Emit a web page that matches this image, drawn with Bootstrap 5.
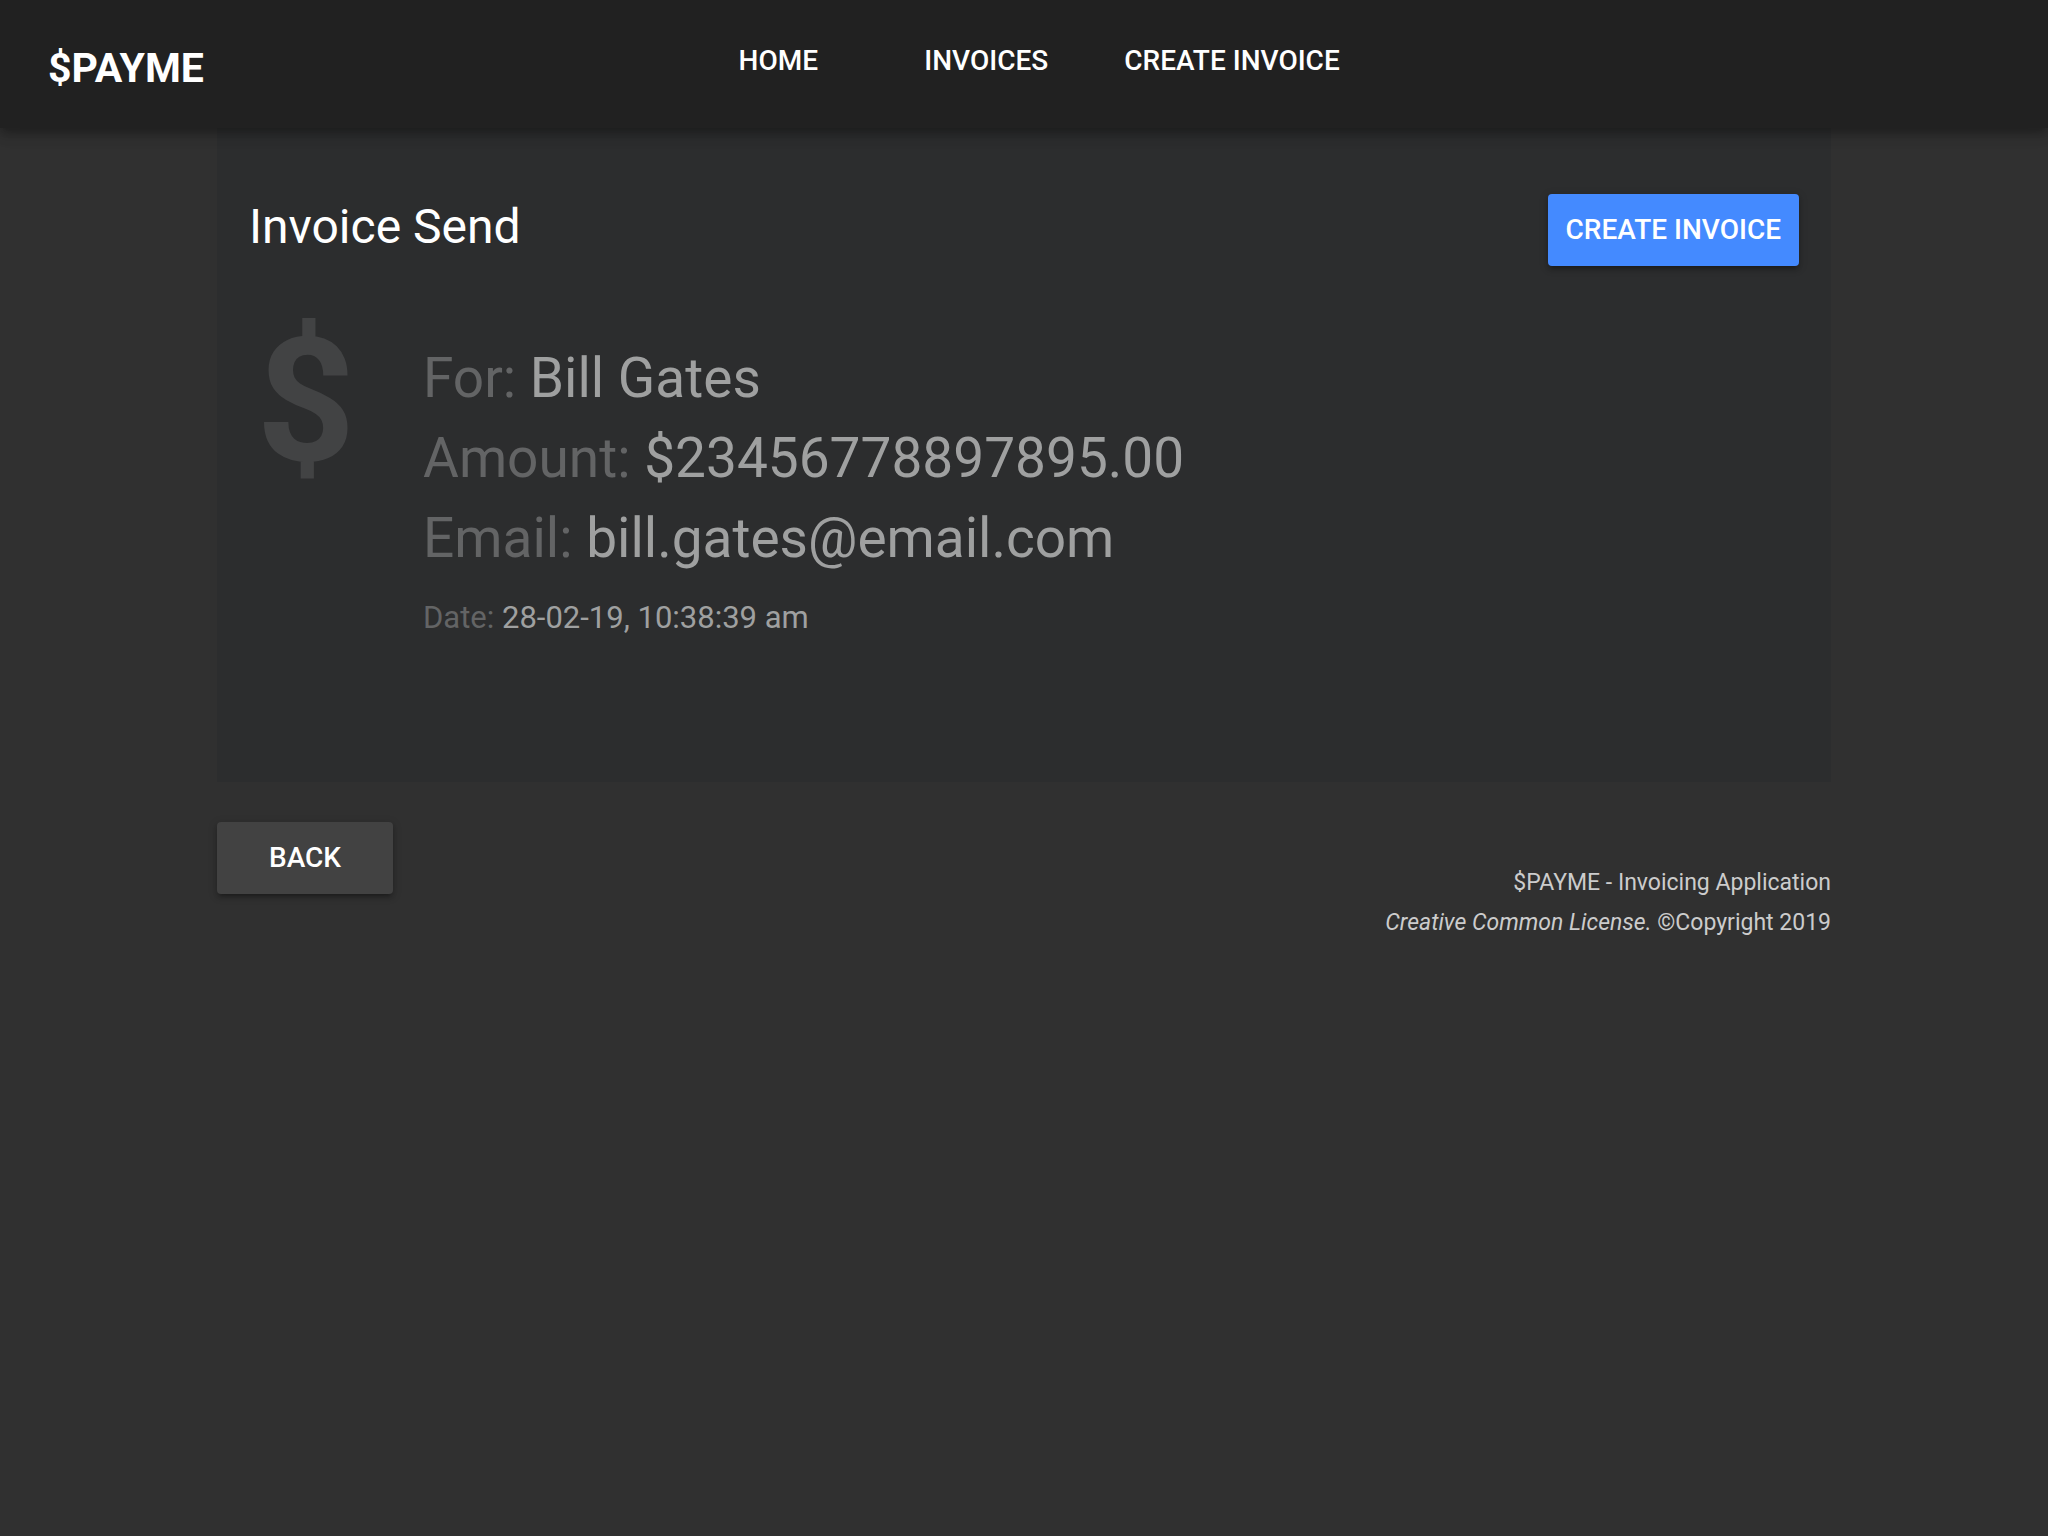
<!DOCTYPE html>
<html lang="en">
<head>
<meta charset="utf-8">
<meta name="viewport" content="width=device-width, initial-scale=1">
<title>$PAYME - Invoice Send</title>
<link href="https://cdn.jsdelivr.net/npm/bootstrap@5.3.0/dist/css/bootstrap.min.css" rel="stylesheet">
<style>
  body {
    background: #303030;
    color: #fff;
    font-family: Roboto, "Liberation Sans", sans-serif;
    font-size: 28px;
  }
  .app-header {
    background: #212121;
    padding: 25px 48px 17px;
    z-index: 2;
    box-shadow: 0 4px 8px -2px rgba(0,0,0,.2), 0 8px 10px 0 rgba(0,0,0,.14), 0 2px 20px 0 rgba(0,0,0,.12);
  }
  .brand-link { font-size: 41px; line-height: 86px; }
  .menu-list { gap: 32px; }
  .app-btn {
    --bs-btn-color: #fff;
    --bs-btn-hover-color: #fff;
    --bs-btn-font-size: 28px;
    --bs-btn-font-weight: 500;
    --bs-btn-line-height: 40px;
    --bs-btn-padding-x: 18px;
    --bs-btn-padding-y: 16px;
    --bs-btn-border-width: 0;
    --bs-btn-border-radius: 4px;
    min-width: 176px;
  }
  .raised {
    box-shadow: 0 2px 10px 0 rgba(0,0,0,.2), 0 4px 4px 0 rgba(0,0,0,.14), 0 6px 2px -4px rgba(0,0,0,.12);
  }
  .btn-create { --bs-btn-bg: #448aff; --bs-btn-hover-bg: #2979ff; }
  .btn-back { --bs-btn-bg: #424242; --bs-btn-hover-bg: #555; }
  .page-wrap { max-width: 1614px; }
  .invoice-panel { background: #2c2d2e; padding: 66px 32px 124px; }
  .panel-title { font-size: 48px; line-height: 66px; }
  .invoice-body { gap: 60px; margin-top: 46px; }
  .currency-sign {
    width: 114px;
    font-size: 173px;
    line-height: 178px;
    color: #424344;
  }
  .details { font-size: 55px; line-height: 80px; padding-top: 26px; color: #9fa0a0; }
  .details dt { color: #636465; }
  .details .detail-date { font-size: 31px; }
  .page-end { margin-top: 40px; }
  .page-footer { margin-top: 41px; font-size: 23px; line-height: 40px; color: #ccc; }
</style>
</head>
<body>
<header class="app-header position-relative">
  <div class="row g-0 align-items-start">
    <div class="col">
      <a class="brand-link d-block fw-bold text-white text-decoration-none" href="#">$PAYME</a>
    </div>
    <nav class="col-auto" aria-label="Main">
      <ul class="menu-list list-unstyled d-flex mb-0">
        <li><a class="btn app-btn" href="#">HOME</a></li>
        <li><a class="btn app-btn" href="#">INVOICES</a></li>
        <li><a class="btn app-btn" href="#">CREATE INVOICE</a></li>
      </ul>
    </nav>
    <div class="col"></div>
  </div>
</header>

<div class="page-wrap container-fluid p-0">
  <main class="invoice-panel">
    <div class="d-flex justify-content-between align-items-start">
      <h1 class="panel-title fw-normal mb-0">Invoice Send</h1>
      <button type="button" class="btn app-btn raised btn-create">CREATE INVOICE</button>
    </div>
    <div class="invoice-body d-flex align-items-start">
      <div class="currency-sign fw-bold text-center" aria-hidden="true">$</div>
      <dl class="details mb-0">
        <div><dt class="d-inline fw-normal">For:</dt> <dd class="d-inline m-0">Bill Gates</dd></div>
        <div><dt class="d-inline fw-normal">Amount:</dt> <dd class="d-inline m-0">$23456778897895.00</dd></div>
        <div><dt class="d-inline fw-normal">Email:</dt> <dd class="d-inline m-0">bill.gates@email.com</dd></div>
        <div class="detail-date"><dt class="d-inline fw-normal">Date:</dt> <dd class="d-inline m-0">28-02-19, 10:38:39 am</dd></div>
      </dl>
    </div>
  </main>
  <div class="page-end d-flex justify-content-between align-items-start">
    <button type="button" class="btn app-btn raised btn-back">BACK</button>
    <footer class="page-footer text-end">
      <div>$PAYME - Invoicing Application</div>
      <div><em>Creative Common License.</em> ©Copyright 2019</div>
    </footer>
  </div>
</div>
<script src="https://cdn.jsdelivr.net/npm/bootstrap@5.3.0/dist/js/bootstrap.bundle.min.js"></script>
</body>
</html>
